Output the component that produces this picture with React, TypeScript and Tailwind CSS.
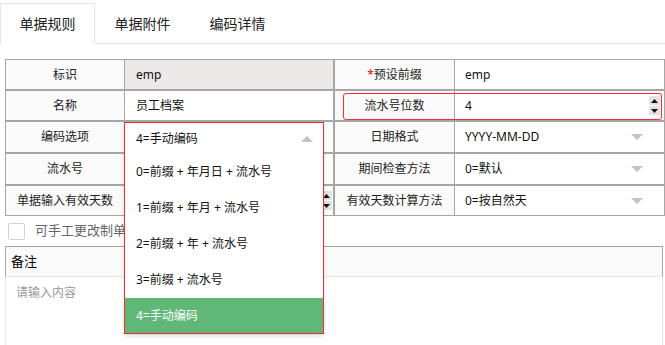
import React from "react";

const BD = "border-[#a6a6a6]";

function Spinner() {
  return (
    <div className="flex flex-col w-[11px] gap-[1px]">
      <div className="h-[9px] bg-[#e3e3e3] flex items-center justify-center">
        <svg width="7" height="4" viewBox="0 0 7 4"><path d="M0 4 L3.5 0 L7 4 Z" fill="#111" /></svg>
      </div>
      <div className="h-[9px] bg-[#e3e3e3] flex items-center justify-center">
        <svg width="7" height="4" viewBox="0 0 7 4"><path d="M0 0 L3.5 4 L7 0 Z" fill="#111" /></svg>
      </div>
    </div>
  );
}

function Caret({ up = false }: { up?: boolean }) {
  return (
    <svg width="12" height="6" viewBox="0 0 12 6">
      <path d={up ? "M0 6 L6 0 L12 6 Z" : "M0 0 L6 6 L12 0 Z"} fill="#c2c2c2" />
    </svg>
  );
}

function LeftBox({ label, h, children, valueCls = "" }: { label: React.ReactNode; h: string; children?: React.ReactNode; valueCls?: string }) {
  return (
    <div className={`w-[329px] ${h} flex border ${BD} relative`}>
      <div className={`w-[119px] shrink-0 border-r ${BD} bg-[#fafafa] flex items-center justify-center text-[12px] text-[#222]`}>{label}</div>
      <div className={`flex-1 flex items-center pl-[11px] text-[12px] text-[#111] ${valueCls}`}>{children}</div>
    </div>
  );
}

function RightBox({ label, h, children, overlay }: { label: React.ReactNode; h: string; children?: React.ReactNode; overlay?: React.ReactNode }) {
  return (
    <div className={`w-[331px] ${h} flex border ${BD} relative`}>
      <div className={`w-[120px] shrink-0 border-r ${BD} bg-[#fafafa] flex items-center justify-center text-[12px] text-[#222]`}>{label}</div>
      <div className="flex-1 flex items-center pl-[10px] text-[12px] text-[#111]">{children}</div>
      {overlay}
    </div>
  );
}

const items = [
  "0=前缀 + 年月日 + 流水号",
  "1=前缀 + 年月 + 流水号",
  "2=前缀 + 年 + 流水号",
  "3=前缀 + 流水号",
  "4=手动编码",
];

export default function App() {
  return (
    <div className="w-[665px] h-[345px] bg-white relative overflow-hidden font-['Noto_Sans','Noto_Sans_CJK_SC',sans-serif]">
      {/* tabs */}
      <div className="pt-[3px]">
        <div className="flex h-[41px] border-b border-[#e6e6e6]">
          <div className="w-[95px] h-[41px] border border-[#e6e6e6] border-b-white bg-white flex items-center justify-center text-[14px] text-[#222]">单据规则</div>
          <div className="w-[95px] h-[40px] flex items-center justify-center text-[14px] text-[#222]">单据附件</div>
          <div className="w-[95px] h-[40px] flex items-center justify-center text-[14px] text-[#222]">编码详情</div>
        </div>
      </div>

      {/* form */}
      <div className="mt-[15px] pl-[5px] flex flex-col">
        <div className="flex">
          <LeftBox label="标识" h="h-[31px]" valueCls="bg-[#ebe8e7]">emp</LeftBox>
          <RightBox label={<span><span className="text-[#ff0000]">*</span>预设前缀</span>} h="h-[31px]">emp</RightBox>
        </div>
        <div className="flex">
          <LeftBox label="名称" h="h-[31px]">员工档案</LeftBox>
          <RightBox
            label="流水号位数"
            h="h-[31px]"
            overlay={<div className="absolute left-[8px] top-[2px] right-[2px] bottom-0 border border-[#ff2a2a] rounded-[3px]" />}
          >
            <div className="flex-1 flex items-center justify-between pr-[4px]">
              <span>4</span>
              <Spinner />
            </div>
          </RightBox>
        </div>
        <div className="flex">
          <LeftBox label="编码选项" h="h-[32px]" />
          <RightBox label="日期格式" h="h-[32px]">
            <div className="flex-1 flex items-center justify-between pr-[21px]">
              <span>YYYY-MM-DD</span>
              <Caret />
            </div>
          </RightBox>
        </div>
        <div className="flex">
          <LeftBox label="流水号" h="h-[32px]" />
          <RightBox label="期间检查方法" h="h-[32px]">
            <div className="flex-1 flex items-center justify-between pr-[21px]">
              <span>0=默认</span>
              <Caret />
            </div>
          </RightBox>
        </div>
        <div className="flex">
          <LeftBox label="单据输入有效天数" h="h-[31px]">
            <div className="flex-1 flex items-center justify-end pr-[1px]">
              <Spinner />
            </div>
          </LeftBox>
          <RightBox label="有效天数计算方法" h="h-[31px]">
            <div className="flex-1 flex items-center justify-between pr-[21px]">
              <span>0=按自然天</span>
              <Caret />
            </div>
          </RightBox>
        </div>
      </div>

      {/* checkbox row */}
      <div className="h-[30px] flex items-center pl-[8px]">
        <div className="w-[17px] h-[17px] border border-[#d2d2d2] rounded-[2px] bg-white" />
        <span className="ml-[10px] text-[13px] text-[#666] whitespace-nowrap">可手工更改制单号</span>
      </div>

      {/* remark */}
      <div className="ml-[5px] w-[658px] flex flex-col">
        <div className={`h-[31px] bg-[#fafafa] border-t border-x ${BD} border-b border-b-[#e6e6e6] flex items-center pl-[5px] text-[13px] text-[#000]`}>备注</div>
        <div className="h-[80px] border-x border-[#e6e6e6] pl-[10px] pt-[7px] text-[12px] text-[#999]">请输入内容</div>
      </div>

      {/* open select dropdown */}
      <div className="absolute left-[124px] top-[122px] w-[200px] border border-[#ff2a2a] bg-white shadow-[0_2px_4px_rgba(0,0,0,0.15)] z-10">
        <div className="h-[31px] flex items-center justify-between pl-[11px] pr-[10px] text-[12px] text-[#111]">
          <span>4=手动编码</span>
          <Caret up />
        </div>
        {items.map((t, i) => (
          <div
            key={t}
            className={`${i === 4 ? "h-[35px] bg-[#5fb878] text-white" : "h-[36px] text-[#111]"} flex items-center pl-[11px] text-[12px] whitespace-nowrap`}
          >
            {t}
          </div>
        ))}
      </div>
    </div>
  );
}
